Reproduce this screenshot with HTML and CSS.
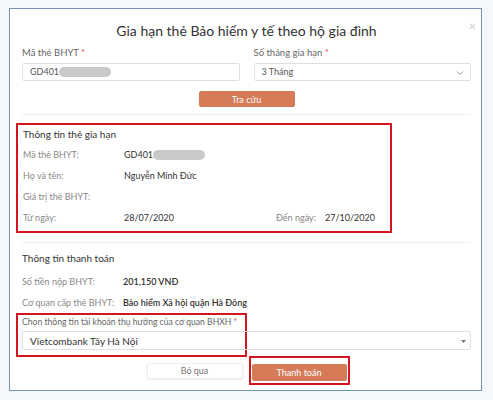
FILE: index.html
```html
<!DOCTYPE html>
<html lang="vi">
<head>
  <meta charset="UTF-8">
  <meta name="viewport" content="width=device-width, initial-scale=1.0">
  <title>Gia hạn thẻ BHYT</title>
  <link rel="stylesheet" href="styles.css">
</head>
<body>
  <div class="modal">
    <span class="close">&times;</span>
    <h1 class="modal-title">Gia hạn thẻ Bảo hiểm y tế theo hộ gia đình</h1>

    <div class="search-row">
      <div class="field">
        <label>Mã thẻ BHYT <span class="req">*</span></label>
        <div class="input">GD401<span class="blur"></span></div>
      </div>
      <div class="field">
        <label>Số tháng gia hạn <span class="req">*</span></label>
        <div class="input select">3 Tháng
          <svg class="chevron" width="8" height="6" viewBox="0 0 8 6"><path d="M1 1.5 L4 4.5 L7 1.5" fill="none" stroke="#999" stroke-width="1"/></svg>
        </div>
      </div>
    </div>

    <div class="actions-top">
      <button class="btn btn-primary">Tra cứu</button>
    </div>

    <hr class="sep">

    <div class="card-info">
      <h2 class="section-title">Thông tin thẻ gia hạn</h2>
      <div class="info-row">
        <span class="lbl">Mã thẻ BHYT:</span>
        <span class="val">GD401<span class="blur"></span></span>
      </div>
      <div class="info-row">
        <span class="lbl">Họ và tên:</span>
        <span class="val">Nguyễn Minh Đức</span>
      </div>
      <div class="info-row">
        <span class="lbl">Giá trị thẻ BHYT:</span>
        <span class="val"></span>
      </div>
      <div class="info-row">
        <span class="lbl">Từ ngày:</span>
        <span class="val">28/07/2020</span>
        <span class="lbl">Đến ngày:</span>
        <span class="val">27/10/2020</span>
      </div>
    </div>

    <hr class="sep sep-low">

    <div class="payment">
      <h2 class="section-title">Thông tin thanh toán</h2>
      <div class="info-row pay-row">
        <span class="lbl">Số tiền nộp BHYT:</span>
        <span class="val strong">201,150 VNĐ</span>
      </div>
      <div class="info-row pay-row">
        <span class="lbl">Cơ quan cấp thẻ BHYT:</span>
        <span class="val strong">Bảo hiểm Xã hội quận Hà Đông</span>
      </div>
    </div>

    <div class="bank-field">
      <span class="mark"></span>
      <label>Chọn thông tin tài khoản thụ hưởng của cơ quan BHXH <span class="req">*</span></label>
      <div class="input select bank">Vietcombank Tây Hà Nội
        <svg class="caret" width="5" height="4" viewBox="0 0 5 4"><path d="M0 0 L5 0 L2.5 3 Z" fill="#777"/></svg>
      </div>
    </div>

    <div class="actions">
      <button class="btn btn-light">Bỏ qua</button>
      <div class="pay-frame">
        <button class="btn btn-primary">Thanh toán</button>
      </div>
    </div>
  </div>
</body>
</html>
```

FILE: styles.css
```css
body {
  margin: 0;
  background: #f3f9fb;
  font-family: Lato, "Open Sans", sans-serif;
  color: #333;
}
.modal {
  position: relative;
  box-sizing: border-box;
  width: 473px;
  height: 383px;
  margin: 8px 0 0 9px;
  padding: 0 10px 0 12px;
  background: #fff;
  border: 1px solid #7592b0;
}
.close {
  position: absolute;
  top: 10px;
  right: 5px;
  font-size: 13px;
  line-height: 14px;
  color: #ccc;
}
.modal-title {
  margin: 12px 0 0;
  font-size: 14px;
  line-height: 20px;
  font-weight: 400;
  text-align: center;
  color: #333;
}
.search-row {
  display: flex;
  gap: 14px;
  margin-top: 5px;
}
.field {
  flex: 1;
}
label {
  display: block;
  font-size: 9.5px;
  line-height: 14px;
  color: #666;
  margin-bottom: 3px;
}
.req {
  color: #d9534f;
}
.input {
  position: relative;
  box-sizing: border-box;
  height: 18px;
  padding: 0 7px;
  border: 1px solid #e0e0e0;
  border-radius: 2px;
  font-size: 9px;
  line-height: 16px;
  color: #555;
  display: flex;
  align-items: center;
}
.blur {
  display: inline-block;
  width: 52px;
  height: 10px;
  border-radius: 5px;
  background: #c9c9c9;
}
.chevron {
  position: absolute;
  right: 6px;
  top: 6px;
}
.actions-top {
  display: flex;
  justify-content: center;
  margin-top: 10px;
}
.btn {
  box-sizing: border-box;
  width: 96px;
  height: 16px;
  padding: 0;
  border: none;
  border-radius: 2px;
  font-family: inherit;
  font-size: 9px;
  cursor: pointer;
}
.btn-primary {
  background: #d67b58;
  color: #fff;
}
.btn-light {
  background: #fff;
  color: #777;
  border: 1px solid #eee;
  box-shadow: 0 1px 2px rgba(0, 0, 0, 0.08);
}
.sep {
  border: none;
  border-top: 1px solid #eee;
  margin: 7px 0 0;
}
.sep-low {
  margin-top: 9px;
}
.card-info {
  box-sizing: border-box;
  width: 376px;
  height: 110px;
  margin: 8px 0 0 -6px;
  padding: 0 5px;
  border: 2px solid #d4141f;
}
.section-title {
  margin: 0;
  font-size: 10px;
  line-height: 19px;
  font-weight: 400;
  color: #333;
}
.info-row {
  display: grid;
  grid-template-columns: 101px 152px 49px auto;
  height: 21px;
  align-items: center;
  font-size: 9px;
  white-space: nowrap;
}
.lbl {
  color: #888;
}
.val {
  color: #333;
  display: flex;
  align-items: center;
}
.strong {
  font-weight: 600;
}
.payment {
  margin-top: 6px;
}
.payment .section-title {
  margin-bottom: 3px;
}
.pay-row {
  grid-template-columns: 101px auto;
}
.bank-field {
  position: relative;
  padding-top: 2px;
}
.bank-field label {
  font-size: 8.6px;
  margin-bottom: 2px;
  white-space: nowrap;
}
.input.bank {
  height: 19px;
  font-size: 10px;
  color: #333;
}
.caret {
  position: absolute;
  right: 4px;
  top: 8px;
}
.mark {
  position: absolute;
  left: -6px;
  top: 0;
  width: 231px;
  height: 44px;
  box-sizing: border-box;
  border: 2px solid #d4141f;
  pointer-events: none;
}
.actions {
  display: flex;
  justify-content: center;
  align-items: center;
  gap: 6px;
  margin-top: 6px;
  padding-left: 3px;
}
.pay-frame {
  padding: 2px 1px;
  border: 2px solid #d4141f;
}
.pay-frame .btn {
  width: 95px;
  height: 17px;
}
```
